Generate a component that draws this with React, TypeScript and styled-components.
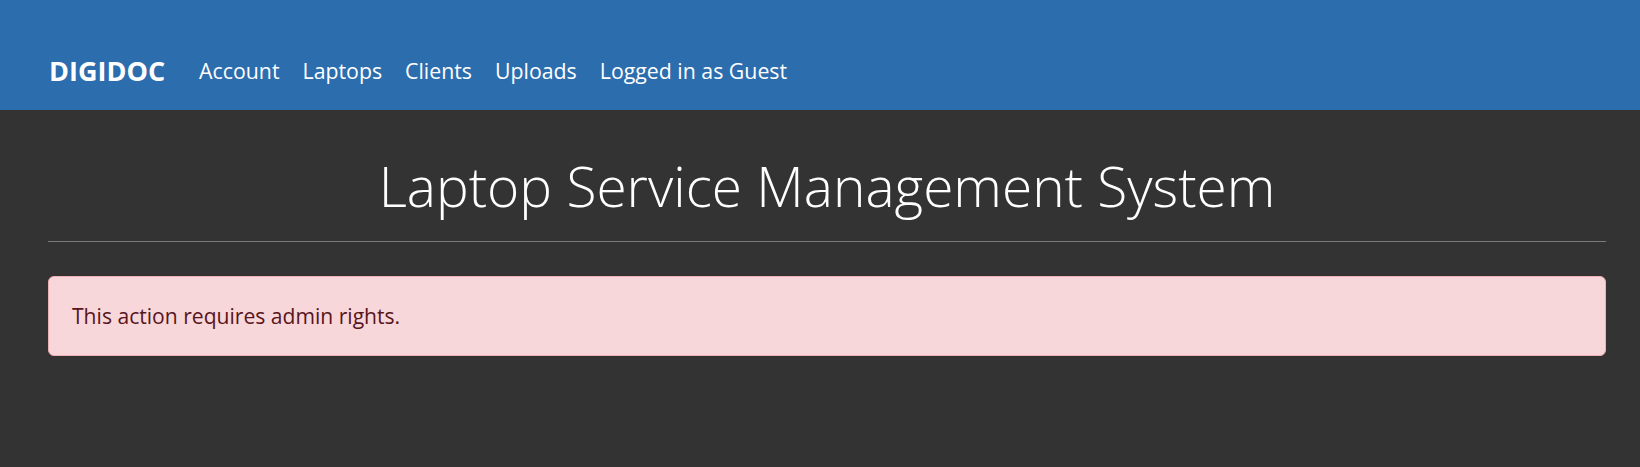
import React from "react";
import styled, { createGlobalStyle } from "styled-components";

const Global = createGlobalStyle`
  html, body { margin: 0; padding: 0; }
  body {
    background: #333333;
    font-family: "Open Sans", "Noto Sans", sans-serif;
    color: #ffffff;
  }
`;

const NavBar = styled.nav`
  background: #2c6dae;
  height: 110px;
  box-sizing: border-box;
  padding: 53px 34px 0 49px;
  display: flex;
  align-items: flex-start;
`;

const NavInner = styled.div`
  display: flex;
  align-items: center;
  height: 36px;
`;

const Brand = styled.a`
  font-weight: 700;
  font-size: 27px;
  color: #fff;
  text-decoration: none;
  margin-right: 34px;
  line-height: 36px;
`;

const NavLinks = styled.div`
  display: flex;
  gap: 23px;
`;

const NavLink = styled.a`
  font-size: 21.3px;
  color: #fff;
  text-decoration: none;
  line-height: 36px;
`;

const Container = styled.main`
  padding: 0 34px 0 48px;
`;

const Title = styled.h1`
  margin: 0;
  padding-top: 40px;
  font-size: 55px;
  font-weight: 300;
  line-height: 72px;
  text-align: center;
  color: #fff;
`;

const Rule = styled.hr`
  margin: 19px 0 34px;
  border: 0;
  border-top: 1px solid #7a7a7a;
`;

const Alert = styled.div`
  background: #f8d7da;
  border: 1px solid #f1aeb5;
  border-radius: 6px;
  color: #58151c;
  font-size: 21.1px;
  line-height: 30px;
  padding: 24px 23px;
`;

export default function App() {
  return (
    <>
      <Global />
      <NavBar>
        <NavInner>
          <Brand href="#">DIGIDOC</Brand>
          <NavLinks>
            <NavLink href="#">Account</NavLink>
            <NavLink href="#">Laptops</NavLink>
            <NavLink href="#">Clients</NavLink>
            <NavLink href="#">Uploads</NavLink>
            <NavLink href="#">Logged in as Guest</NavLink>
          </NavLinks>
        </NavInner>
      </NavBar>
      <Container>
        <Title>Laptop Service Management System</Title>
        <Rule />
        <Alert>This action requires admin rights.</Alert>
      </Container>
    </>
  );
}
